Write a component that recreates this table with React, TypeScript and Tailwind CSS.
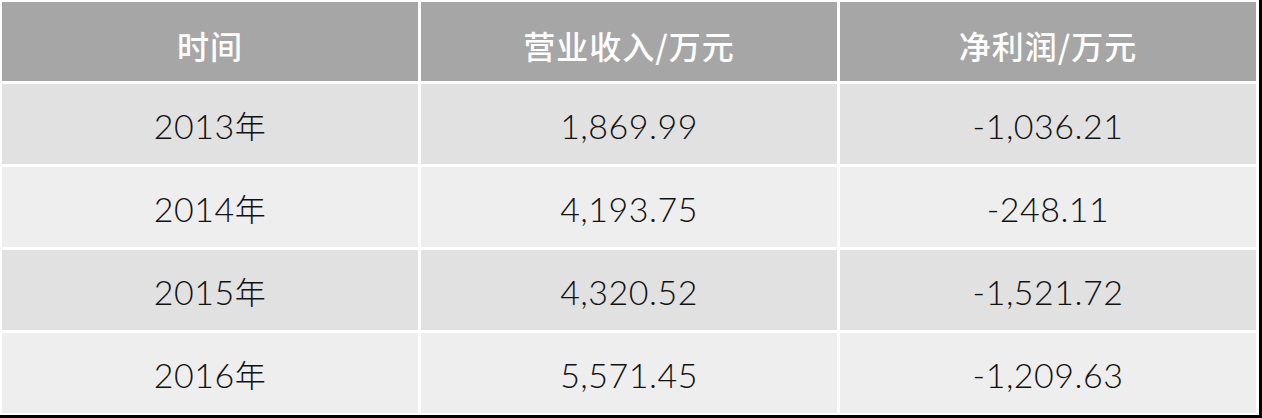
import { Fragment, type ReactNode } from "react";

const rows = [
  { year: "2013", revenue: "1,869.99", profit: "-1,036.21" },
  { year: "2014", revenue: "4,193.75", profit: "-248.11" },
  { year: "2015", revenue: "4,320.52", profit: "-1,521.72" },
  { year: "2016", revenue: "5,571.45", profit: "-1,209.63" },
];

const headers = ["时间", "营业收入/万元", "净利润/万元"];

function Cell({ bg, children }: { bg: string; children: ReactNode }) {
  return (
    <div
      className={`h-[80px] ${bg} flex items-center justify-center pt-[2px] text-[#111111] text-[34px] font-light tracking-[0.5px]`}
    >
      {children}
    </div>
  );
}

export default function App() {
  return (
    <div className="w-[1262px] h-[418px] box-border bg-white border-r-[3px] border-b-[3px] border-black pl-[2px] pt-[2px]">
      <div className="w-[1254px] grid grid-cols-3 gap-[3px] font-['Lato','Noto_Sans_CJK_SC',sans-serif]">
        {headers.map((h) => (
          <div
            key={h}
            className="h-[79px] bg-[#a6a6a6] flex items-center justify-center pt-[6px] text-white text-[32px] font-medium tracking-[1px] font-['Noto_Sans_CJK_SC',sans-serif]"
          >
            {h}
          </div>
        ))}
        {rows.map((r, i) => {
          const bg = i % 2 === 0 ? "bg-[#e1e1e1]" : "bg-[#eeeeee]";
          return (
            <Fragment key={r.year}>
              <Cell bg={bg}>
                {r.year}
                <span className="text-[31px] font-light font-['Noto_Sans_CJK_SC',sans-serif]">年</span>
              </Cell>
              <Cell bg={bg}>{r.revenue}</Cell>
              <Cell bg={bg}>{r.profit}</Cell>
            </Fragment>
          );
        })}
      </div>
    </div>
  );
}
